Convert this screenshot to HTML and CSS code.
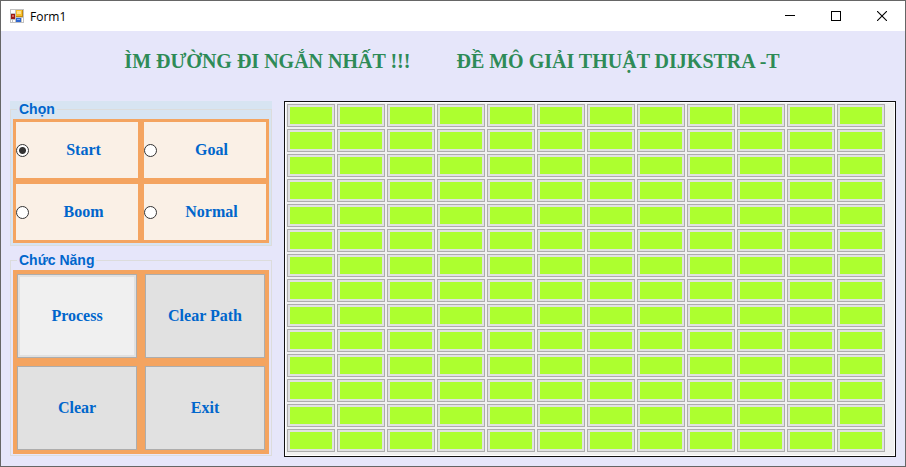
FILE: index.html
```html
<!DOCTYPE html>
<html lang="vi">
<head>
  <meta charset="UTF-8">
  <meta name="viewport" content="width=device-width, initial-scale=1.0">
  <title>Form1</title>
  <link rel="stylesheet" href="styles.css">
</head>
<body>

<div class="window">
  <header class="titlebar">
    <svg class="app-icon" width="14" height="14" viewBox="0 0 14 14" shape-rendering="crispEdges">
      <rect width="14" height="14" fill="#c2c2c2"/>
      <path d="M1 1h4v3H1zM1 11h1v2H1zM3 11h2v2H3zM12 9h1v4h-1z" fill="#fff"/>
      <rect x="1" y="5" width="4" height="5" fill="#9c1b14"/>
      <rect x="2" y="6" width="2" height="2" fill="#d9635a"/>
      <rect x="6" y="1" width="7" height="7" fill="#c68a0c"/>
      <rect x="6" y="1" width="6" height="6" fill="#f7c02c"/>
      <rect x="7" y="2" width="4" height="3" fill="#ffe08a"/>
      <rect x="6" y="9" width="5" height="4" fill="#2f66cf"/>
      <rect x="7" y="10" width="3" height="1" fill="#86b0f5"/>
    </svg>
    <h1 class="caption">Form1</h1>
    <button class="win-btn" aria-label="Minimize">
      <svg width="10" height="10" viewBox="0 0 10 10" shape-rendering="crispEdges"><path d="M0 4.5h10" stroke="#000"/></svg>
    </button>
    <button class="win-btn" aria-label="Maximize">
      <svg width="10" height="10" viewBox="0 0 10 10" shape-rendering="crispEdges"><path d="M.5 .5h9v9h-9z" fill="none" stroke="#000"/></svg>
    </button>
    <button class="win-btn" aria-label="Close">
      <svg width="10" height="10" viewBox="0 0 10 10"><path d="M0 0l10 10M10 0L0 10" stroke="#000" stroke-width="1.1"/></svg>
    </button>
  </header>

  <p class="banner"><span>ÌM ĐƯỜNG ĐI NGẮN NHẤT !!!</span><span>ĐỀ MÔ GIẢI THUẬT DIJKSTRA -T</span></p>

  <main class="content">
    <div class="sidebar">
      <div class="group group-mode">
        <fieldset>
          <legend>Chọn</legend>
          <div class="panel modes">
            <label class="mode"><input type="radio" name="mode" value="start" checked><span>Start</span></label>
            <label class="mode"><input type="radio" name="mode" value="goal"><span>Goal</span></label>
            <label class="mode"><input type="radio" name="mode" value="boom"><span>Boom</span></label>
            <label class="mode"><input type="radio" name="mode" value="normal"><span>Normal</span></label>
          </div>
        </fieldset>
      </div>

      <div class="group group-action">
        <fieldset>
          <legend>Chức Năng</legend>
          <div class="panel actions">
            <button class="action process">Process</button>
            <button class="action">Clear Path</button>
            <button class="action">Clear</button>
            <button class="action">Exit</button>
          </div>
        </fieldset>
      </div>
    </div>

    <div class="board" id="board"></div>
  </main>
</div>

<script>
  const ROWS = 14;
  const COLS = 12;
  const board = document.getElementById('board');

  for (let r = 1; r <= ROWS; r++) {
    for (let c = 1; c <= COLS; c++) {
      const cell = document.createElement('button');
      cell.className = 'cell';
      cell.setAttribute('aria-label', `${r}, ${c}`);
      board.appendChild(cell);
    }
  }
</script>

</body>
</html>
```
FILE: styles.css
```css
* {
  margin: 0;
  padding: 0;
  box-sizing: border-box;
}
body {
  font-family: "Liberation Serif", serif;
  background-color: #e6e6fa;
}
button {
  border: none;
  border-radius: 0;
  font-family: inherit;
}
.window {
  display: flex;
  flex-direction: column;
  min-height: 100vh;
  border: 1px solid #666;
}

/* title bar */
.titlebar {
  display: flex;
  align-items: center;
  height: 30px;
  padding-left: 9px;
  background-color: #fff;
}
.app-icon {
  margin-right: 6px;
}
.caption {
  flex: 1;
  font-family: "Open Sans", sans-serif;
  font-size: 12px;
  font-weight: normal;
  color: #000;
}
.win-btn {
  display: flex;
  align-items: center;
  justify-content: center;
  width: 46px;
  height: 30px;
  background-color: transparent;
}
.win-btn:hover {
  background-color: #e5e5e5;
}

.banner {
  display: flex;
  justify-content: center;
  gap: 46px;
  padding: 18px 2px 28px 0;
  font-size: 20px;
  font-weight: bold;
  line-height: 24px;
  white-space: nowrap;
  color: #2e8b57;
}

.content {
  flex: 1;
  display: flex;
  gap: 12px;
  padding: 0 9px 9px;
}
.sidebar {
  display: flex;
  flex-direction: column;
  gap: 6px;
  width: 262px;
}
.group-mode {
  background-color: #d7e4f2;
}
.group-action {
  flex: 1;
}
fieldset {
  min-width: 0;
  border: 1px solid #dcdcdc;
  padding: 2px;
}
.group-action fieldset {
  padding-bottom: 1px;
}
legend {
  margin-left: 4px;
  padding: 0 2px;
  font-family: "Liberation Sans", sans-serif;
  font-size: 14px;
  font-weight: bold;
  line-height: 16px;
  color: #0066cc;
}
.panel {
  display: grid;
  grid-template-columns: 1fr 1fr;
  background-color: #f4a460;
}
.modes {
  grid-auto-rows: 56px;
  gap: 6px;
  padding: 3px;
}
.mode {
  display: flex;
  align-items: center;
  background-color: #faf0e6;
  font-size: 16px;
  font-weight: bold;
  color: #0066cc;
}
.mode span {
  flex: 1;
  text-align: center;
}
.mode input {
  appearance: none;
  width: 13px;
  height: 13px;
  border: 1px solid #333;
  border-radius: 50%;
  background-color: #fff;
}
.mode input:checked {
  background-image: radial-gradient(circle, #333 3px, transparent 4px);
}

.actions {
  grid-auto-rows: 84px;
  gap: 8px;
  padding: 4px;
}
.action {
  border: 1px solid #adadad;
  background-color: #e1e1e1;
  font-size: 16px;
  font-weight: bold;
  color: #0066cc;
}
.process {
  background-color: #f0f0f0;
  box-shadow: inset 0 0 0 2px #e1e1e1;
}

/* map */
.board {
  flex: 1;
  display: grid;
  grid-template-columns: repeat(12, 48px);
  grid-auto-rows: 23px;
  align-content: start;
  gap: 2px;
  padding: 2px;
  border: 1px solid #111;
  background-color: #f0f0f0;
  box-shadow: inset 0 0 0 1px #fff;
}
.cell {
  border: 1px solid #adadad;
  background-color: #adff2f;
  box-shadow: inset 0 0 0 2px #e1e1e1;
}
```
